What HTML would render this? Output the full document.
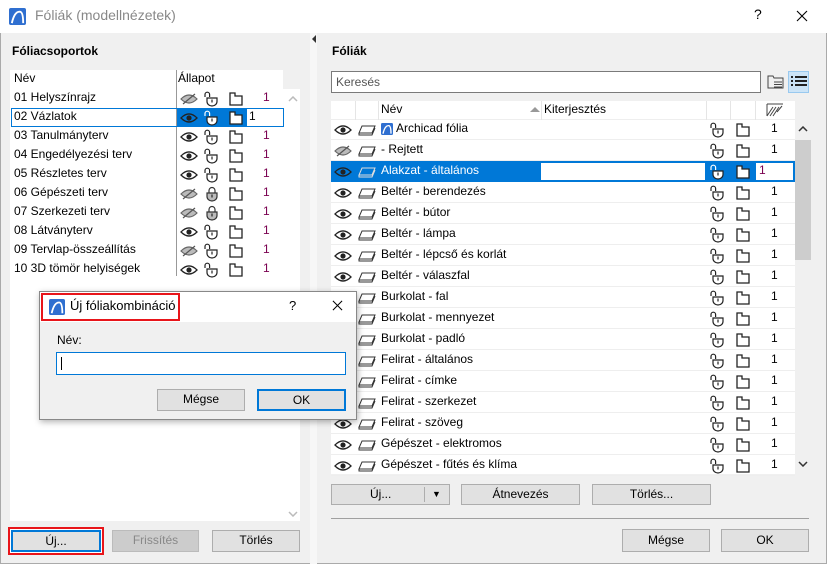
<!DOCTYPE html>
<html><head><meta charset="utf-8"><style>
*{box-sizing:border-box}
body{margin:0;width:827px;height:564px;overflow:hidden;background:#f0f0f0;font-family:"Segoe UI","Liberation Sans",sans-serif;font-size:12px;color:#000;position:relative}
.a{position:absolute}
.btn{position:absolute;background:#e1e1e1;border:1px solid #adadad;text-align:center;line-height:19px;font-size:12px}
svg.i{position:absolute}
.p{color:#7a0050}
</style></head><body>
<svg width="0" height="0" style="position:absolute"><defs>
<symbol id="eye" viewBox="0 0 18 12"><path d="M1 6Q9 -2 17 6Q9 14 1 6Z" fill="none" stroke="#222" stroke-width="1.3"/><circle cx="9" cy="6" r="2.6" fill="#222"/></symbol>
<symbol id="eyex" viewBox="0 0 18 12"><path d="M1 6Q9 -2 17 6Q9 14 1 6Z" fill="#bbb" stroke="#666" stroke-width="1.2"/><path d="M3 11L15 1" stroke="#555" stroke-width="1.2"/></symbol>
<symbol id="lk" viewBox="0 0 16 16"><path d="M2 6V3.5A2.3 2.3 0 0 1 6.6 3.5V6" fill="none" stroke="#222" stroke-width="1.2"/><path d="M4 7H14V10.5A5 4.5 0 0 1 4 10.5Z" fill="#fff" stroke="#222" stroke-width="1.2"/><path d="M9 8.5V11.5" stroke="#222" stroke-width="1.2"/></symbol>
<symbol id="lkw" viewBox="0 0 16 16"><path d="M2 6V3.5A2.3 2.3 0 0 1 6.6 3.5V6" fill="none" stroke="#fff" stroke-width="1.2"/><path d="M4 7H14V10.5A5 4.5 0 0 1 4 10.5Z" fill="#fff" stroke="#222" stroke-width="1.2"/><path d="M9 8.5V11.5" stroke="#222" stroke-width="1.2"/></symbol>
<symbol id="lkc" viewBox="0 0 16 16"><path d="M6 7V4.5A3 3 0 0 1 12 4.5V7" fill="none" stroke="#333" stroke-width="1.2"/><path d="M4 7H14V10.5A5 4.5 0 0 1 4 10.5Z" fill="#bbb" stroke="#333" stroke-width="1.2"/><path d="M9 8.5V11.5" stroke="#222" stroke-width="1.2"/></symbol>
<symbol id="doc" viewBox="0 0 16 16"><path d="M2 2H7V5H14V14H2Z" fill="#fff" stroke="#222" stroke-width="1.3"/></symbol>
<symbol id="ly" viewBox="0 0 18 12"><path d="M4 2H17L14 9H1Z M1 9V11H14L17 4" fill="none" stroke="#333" stroke-width="1"/></symbol>
<symbol id="lyw" viewBox="0 0 18 12"><path d="M4 2H17L14 9H1Z M1 9V11H14L17 4" fill="none" stroke="#ddd" stroke-width="1"/></symbol>
<symbol id="ac" viewBox="0 0 18 18"><rect width="18" height="18" rx="2" fill="#2f6fd0"/><path d="M3 16Q6 3 12 4Q15 5 15 16" fill="none" stroke="#fff" stroke-width="2"/></symbol>
<symbol id="up" viewBox="0 0 10 6"><path d="M1 5L5 1L9 5" fill="none" stroke="currentColor" stroke-width="1.5"/></symbol>
<symbol id="dn" viewBox="0 0 10 6"><path d="M1 1L5 5L9 1" fill="none" stroke="currentColor" stroke-width="1.5"/></symbol>
<symbol id="x" viewBox="0 0 12 12"><path d="M1 1L11 11M11 1L1 11" stroke="#000" stroke-width="1.1"/></symbol>
</defs></svg>

<div class="a" style="left:0;top:0;width:827px;height:33px;background:#fff"></div>
<svg class="i" style="left:9px;top:8px" width="17" height="17"><use href="#ac"/></svg>
<div class="a" style="left:35px;top:7px;font-size:14px;color:#888">Fóliák (modellnézetek)</div>
<div class="a" style="left:754px;top:6px;font-size:14px">?</div>
<svg class="i" style="left:796px;top:10px" width="12" height="12"><use href="#x"/></svg>
<div class="a" style="left:0;top:33px;width:827px;height:531px;border:1px solid #aaa;border-top:none"></div>

<div class="a" style="left:310px;top:33px;width:7px;height:531px;background:#f7f7f7"></div>
<div class="a" style="left:312px;top:35px;width:0;height:0;border:4px solid transparent;border-right-color:#333;border-left:none"></div>

<div class="a" style="left:12px;top:44px;font-weight:bold">Fóliacsoportok</div>
<div class="a" style="left:10px;top:70px;width:290px;height:451px;background:#fff"></div>
<div class="a" style="left:283px;top:70px;width:17px;height:19px;background:#f0f0f0"></div>
<div class="a" style="left:176px;top:70px;width:1px;height:206px;background:#999"></div>
<div class="a" style="left:14px;top:71px">Név</div>
<div class="a" style="left:178px;top:71px">Állapot</div>
<svg class="i" style="left:288px;top:96px;color:#bbb" width="10" height="6"><use href="#up"/></svg>
<svg class="i" style="left:288px;top:511px;color:#bbb" width="10" height="6"><use href="#dn"/></svg>
<div class="a" style="left:11px;top:108px;width:273px;height:19px;border:1px solid #0078d7"></div>
<div class="a" style="left:177px;top:109px;width:70px;height:17px;background:#0078d7"></div>
<div id="L"></div>

<div class="btn" style="left:8px;top:527px;width:96px;height:28px;border:2px solid #e8151a;background:#fff"></div>
<div class="btn" style="left:11px;top:530px;width:90px;height:22px;border:2px solid #0078d7;line-height:18px">Új...</div>
<div class="btn" style="left:112px;top:530px;width:87px;height:22px;color:#888;background:#ccc;border-color:#bbb">Frissítés</div>
<div class="btn" style="left:212px;top:530px;width:88px;height:22px">Törlés</div>

<div class="a" style="left:332px;top:44px;font-weight:bold">Fóliák</div>
<div class="a" style="left:331px;top:71px;width:430px;height:22px;background:#fff;border:1px solid #7a7a7a;padding:3px 4px;color:#555">Keresés</div>
<svg class="i" style="left:767px;top:74px" width="18" height="16"><path d="M1 2H6L7 4H16V14H1Z" fill="none" stroke="#444"/><path d="M7 8H15M7 10.5H15M7 13H15" stroke="#444"/></svg>
<div class="a" style="left:788px;top:71px;width:21px;height:22px;background:#cce4f7;border:1px solid #99c9ef"></div>
<svg class="i" style="left:791px;top:75px" width="16" height="14"><path d="M0 2H2M4 2H16M0 6H2M4 6H16M0 10H2M4 10H16" stroke="#222" stroke-width="2"/></svg>

<div class="a" style="left:331px;top:101px;width:464px;height:373px;background:#fff"></div>
<div class="a" style="left:795px;top:120px;width:16px;height:354px;background:#f0f0f0"></div>
<div class="a" style="left:795px;top:140px;width:16px;height:120px;background:#cdcdcd"></div>
<svg class="i" style="left:798px;top:126px;color:#333" width="10" height="6"><use href="#up"/></svg>
<svg class="i" style="left:798px;top:461px;color:#333" width="10" height="6"><use href="#dn"/></svg>
<div class="a" style="left:331px;top:101px;width:464px;height:19px;border-bottom:1px solid #eee"></div>
<div class="a" style="left:355px;top:101px;width:1px;height:19px;background:#e5e5e5"></div>
<div class="a" style="left:378px;top:101px;width:1px;height:19px;background:#e5e5e5"></div>
<div class="a" style="left:541px;top:101px;width:1px;height:19px;background:#e5e5e5"></div>
<div class="a" style="left:706px;top:101px;width:1px;height:19px;background:#e5e5e5"></div>
<div class="a" style="left:730px;top:101px;width:1px;height:19px;background:#e5e5e5"></div>
<div class="a" style="left:755px;top:101px;width:1px;height:19px;background:#e5e5e5"></div>
<div class="a" style="left:381px;top:102px">Név</div>
<div class="a" style="left:530px;top:107px;width:0;height:0;border:5px solid transparent;border-bottom-color:#999;border-top:none"></div>
<div class="a" style="left:544px;top:102px">Kiterjesztés</div>
<svg class="i" style="left:766px;top:103px" width="18" height="14"><path d="M1 1H17M1 1V13M1 13L7 4M4 13L10 4M7 13L13 4M11 9L16 3" stroke="#444" stroke-width="1"/></svg>
<div id="R"></div>

<div class="btn" style="left:331px;top:484px;width:119px;height:21px;text-align:left;padding-left:38px">Új...<span style="position:absolute;left:92px;top:2px;width:1px;height:15px;background:#adadad"></span><span style="position:absolute;left:100px;top:0;font-size:9px">▼</span></div>
<div class="btn" style="left:461px;top:484px;width:119px;height:21px">Átnevezés</div>
<div class="btn" style="left:592px;top:484px;width:119px;height:21px">Törlés...</div>
<div class="a" style="left:331px;top:518px;width:478px;height:1px;background:#a0a0a0"></div>
<div class="btn" style="left:622px;top:529px;width:88px;height:23px;line-height:21px">Mégse</div>
<div class="btn" style="left:721px;top:529px;width:88px;height:23px;line-height:21px">OK</div>

<div class="a" style="left:39px;top:291px;width:318px;height:129px;background:#f0f0f0;border:1px solid #888;box-shadow:1px 2px 6px rgba(0,0,0,.3)"></div>
<div class="a" style="left:40px;top:292px;width:316px;height:30px;background:#fff"></div>
<div class="a" style="left:41px;top:293px;width:139px;height:28px;border:2px solid #e8151a"></div>
<svg class="i" style="left:49px;top:299px" width="16" height="16"><use href="#ac"/></svg>
<div class="a" style="left:70px;top:298px;font-size:13px">Új fóliakombináció</div>
<div class="a" style="left:289px;top:298px;font-size:13px">?</div>
<svg class="i" style="left:332px;top:300px" width="11" height="11"><use href="#x"/></svg>
<div class="a" style="left:57px;top:333px">Név:</div>
<div class="a" style="left:56px;top:352px;width:290px;height:23px;background:#fff;border:1px solid #0078d7"></div>
<div class="a" style="left:61px;top:357px;width:1px;height:13px;background:#000"></div>
<div class="btn" style="left:157px;top:389px;width:88px;height:22px">Mégse</div>
<div class="btn" style="left:257px;top:389px;width:89px;height:22px;border:2px solid #0078d7;line-height:18px">OK</div>

<script>
var L=[["01 Helyszínrajz",0,0],["02 Vázlatok",1,0],["03 Tanulmányterv",1,0],["04 Engedélyezési terv",1,0],["05 Részletes terv",1,0],["06 Gépészeti terv",0,1],["07 Szerkezeti terv",0,1],["08 Látványterv",1,0],["09 Tervlap-összeállítás",0,0],["10 3D tömör helyiségek",1,0]];
var h="";L.forEach(function(r,i){var t=89+i*19,s=i==1;
h+='<div class="a" style="left:14px;top:'+(t+1)+'px">'+r[0]+'</div>';
h+='<svg class="i" style="left:180px;top:'+(t+4)+'px" width="18" height="12"><use href="#'+(r[1]?'eye':'eyex')+'"/></svg>';
h+='<svg class="i" style="left:203px;top:'+(t+2)+'px" width="16" height="16"><use href="#'+(r[2]?'lkc':(s?'lkw':'lk'))+'"/></svg>';
h+='<svg class="i" style="left:228px;top:'+(t+2)+'px" width="16" height="16"><use href="#doc"/></svg>';
h+=s?'<div class="a" style="left:249px;top:'+(t+1)+'px">1</div>':'<div class="a p" style="left:263px;top:'+(t+1)+'px">1</div>';});
document.getElementById("L").outerHTML=h;
var R=["Archicad fólia","- Rejtett","Alakzat - általános","Beltér - berendezés","Beltér - bútor","Beltér - lámpa","Beltér - lépcső és korlát","Beltér - válaszfal","Burkolat - fal","Burkolat - mennyezet","Burkolat - padló","Felirat - általános","Felirat - címke","Felirat - szerkezet","Felirat - szöveg","Gépészet - elektromos","Gépészet - fűtés és klíma"];
h="";R.forEach(function(n,i){var t=119+i*21,s=i==2;
if(s){h+='<div class="a" style="left:331px;top:'+t+'px;width:464px;height:21px;background:#0078d7"></div><div class="a" style="left:541px;top:'+(t+2)+'px;width:164px;height:17px;background:#fff"></div><div class="a" style="left:756px;top:'+(t+2)+'px;width:37px;height:17px;background:#fff"></div>';}
else h+='<div class="a" style="left:331px;top:'+(t+20)+'px;width:464px;height:1px;background:#eee"></div>';
h+='<svg class="i" style="left:334px;top:'+(t+5)+'px" width="18" height="12"><use href="#'+(i==1?'eyex':'eye')+'"/></svg>';
h+='<svg class="i" style="left:358px;top:'+(t+5)+'px" width="18" height="12"><use href="#'+(s?'lyw':'ly')+'"/></svg>';
var x=381;if(i==0){h+='<svg class="i" style="left:381px;top:'+(t+4)+'px" width="12" height="12"><use href="#ac"/></svg>';x=396;}
h+='<div class="a" style="left:'+x+'px;top:'+(t+2)+'px;'+(s?'color:#fff':'')+'">'+n+'</div>';
h+='<svg class="i" style="left:709px;top:'+(t+3)+'px" width="16" height="16"><use href="#'+(s?'lkw':'lk')+'"/></svg>';
h+='<svg class="i" style="left:735px;top:'+(t+3)+'px" width="16" height="16"><use href="#doc"/></svg>';
h+=s?'<div class="a p" style="left:759px;top:'+(t+2)+'px">1</div>':'<div class="a" style="left:771px;top:'+(t+2)+'px">1</div>';});
document.getElementById("R").outerHTML=h;
</script>
</body></html>
